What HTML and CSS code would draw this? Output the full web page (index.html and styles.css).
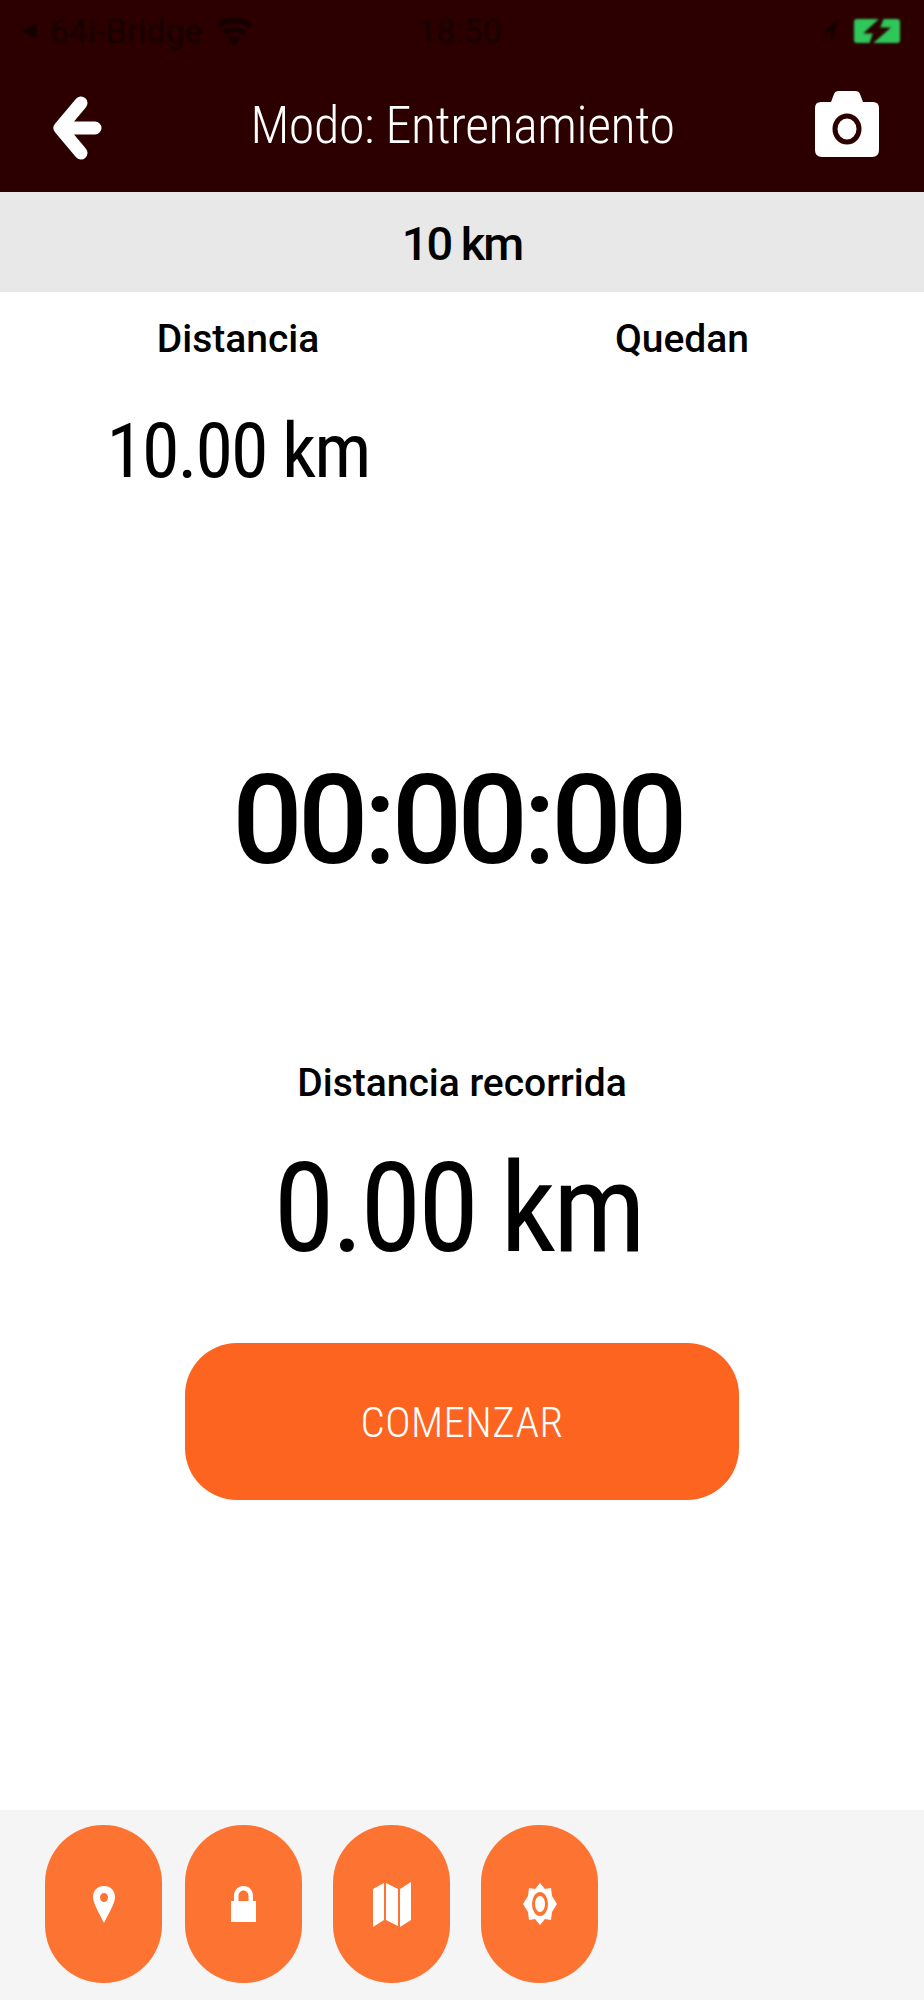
FILE: index.html
```html
<!DOCTYPE html>
<html lang="es">
<head>
  <meta charset="UTF-8">
  <meta name="viewport" content="width=device-width, initial-scale=1.0">
  <title>Modo: Entrenamiento</title>
  <link rel="stylesheet" href="styles.css">
</head>
<body>
  <div id="app">
    <header class="top-bar">
      <div class="status-bar">
        <div class="status-left">
          <svg class="status-back" viewBox="0 0 14 16"><path d="M14 1v14L0 8z"/></svg>
          <span class="status-carrier">64i-Bridge</span>
          <svg class="status-wifi" viewBox="0 0 36 28"><path d="M18 28l-6-7a9 9 0 0 1 12 0z"/><path d="M9.500 18l-3.200-3.800a18 18 0 0 1 23.400 0L26.500 18a13 13 0 0 0-17 0z"/><path d="M3.800 11.500L0.500 7.500a27 27 0 0 1 35 0l-3.300 4a22 22 0 0 0-28.400 0z"/></svg>
        </div>
        <span class="status-time">18:50</span>
        <div class="status-right">
          <svg class="status-loc" viewBox="0 0 16 24"><path d="M16 0L0 13h8v11z"/></svg>
          <svg class="status-batt" viewBox="0 0 46 26">
            <rect x="0" y="1" width="46" height="24" rx="3" fill="#2fc65a"/>
            <path d="M27 1L13 14h8l-4 11 16-14h-9l4-10z" fill="#2d0000" stroke="#2d0000" stroke-width="3"/>
          </svg>
        </div>
      </div>
      <div class="nav-bar">
        <svg class="nav-back" viewBox="0 0 50 64">
          <path d="M29 7L8 32l21 25M10 32h33" fill="none" stroke="#fff" stroke-width="13" stroke-linecap="round" stroke-linejoin="round"/>
        </svg>
        <h1 class="nav-title">Modo: Entrenamiento</h1>
        <svg class="nav-camera" viewBox="0 0 64 68">
          <path d="M6 12h10l3-8q1-3 5-3h16q4 0 5 3l3 8h10q6 0 6 6v42q0 7-7 7H7q-7 0-7-7V18q0-6 6-6z" fill="#fff"/>
          <ellipse cx="32" cy="39" rx="12" ry="13" fill="none" stroke="#2d0000" stroke-width="5"/>
        </svg>
      </div>
    </header>

    <div class="sub-bar">10 km</div>

    <section class="stats">
      <div class="stat">
        <div class="stat-label">Distancia</div>
        <div class="stat-value">10.00 km</div>
      </div>
      <div class="stat">
        <div class="stat-label">Quedan</div>
      </div>
    </section>

    <div class="timer">00:00:00</div>

    <section class="travelled">
      <div class="stat-label">Distancia recorrida</div>
      <div class="travelled-value">0.00 km</div>
    </section>

    <button class="start-btn" type="button">COMENZAR</button>

    <footer class="tabs">
      <button class="tab-btn" type="button">
        <svg class="icon-pin" viewBox="0 0 22 37"><path fill-rule="evenodd" d="M11 0c6.500 0 11 4.700 11 10.800C22 17.500 16 27 11 37 6 27 0 17.500 0 10.800 0 4.700 4.500 0 11 0zm0 7a4 4.500 0 1 0 0 9 4 4.500 0 0 0 0-9z"/></svg>
      </button>
      <button class="tab-btn" type="button">
        <svg class="icon-lock" viewBox="0 0 25 36"><path fill-rule="evenodd" d="M0 15h3V10C3 4 7 0 12.500 0S22 4 22 10v5h3v21H0zm7.500 0h10V10c0-3-2-5.500-5-5.500s-5 2.500-5 5.500z"/></svg>
      </button>
      <button class="tab-btn" type="button">
        <svg class="icon-map" viewBox="0 0 38 45"><path d="M0 7l11-6v37L0 45zM13 1l12 6v37l-12-6zM27 7l11-7v38l-11 7z"/></svg>
      </button>
      <button class="tab-btn" type="button">
        <svg class="icon-gear" viewBox="0 0 34 42"><path fill-rule="evenodd" d="M17 0l5 6 6-1 1 8 5 8-5 8-1 8-6-1-5 6-5-6-6 1-1-8-5-8 5-8 1-8 6 1zm0 9a8 12 0 1 0 0 24 8 12 0 0 0 0-24zm0 4a5 8 0 1 1 0 16 5 8 0 0 1 0-16z"/></svg>
      </button>
    </footer>
  </div>
</body>
</html>
```

FILE: styles.css
```css
/* page */
body {
  margin: 0;
  font-family: Roboto, "Liberation Sans", sans-serif;
  font-stretch: 80%;
  color: #000;
  background: #fff;
}

#app {
  height: 2000px;
  display: flex;
  flex-direction: column;
  overflow: hidden;
}

/* header */
.top-bar {
  height: 192px;
  background: #2d0000;
  flex-shrink: 0;
}

.status-bar {
  height: 62px;
  padding: 0 24px 0 20px;
  display: flex;
  align-items: center;
  justify-content: space-between;
  color: #150000;
  font-size: 34px;
  font-stretch: 88%;
  filter: blur(1px);
}

.status-left,
.status-right {
  width: 300px;
  display: flex;
  align-items: center;
}

.status-right {
  justify-content: flex-end;
  gap: 15px;
}

.status-left svg,
.status-right svg {
  fill: #150000;
}

.status-carrier {
  margin: 0 12px;
}

.status-back {
  width: 18px;
  height: 18px;
}

.status-wifi {
  width: 38px;
  height: 30px;
}

.status-loc {
  width: 16px;
  height: 24px;
}

.status-batt {
  width: 46px;
  height: 26px;
}

.nav-bar {
  height: 130px;
  padding: 0 45px 0 52px;
  display: flex;
  align-items: flex-start;
  justify-content: space-between;
}

.nav-back {
  width: 50px;
  height: 64px;
  margin-top: 34px;
}

.nav-title {
  margin: 33px 0 0 8px;
  font-size: 52px;
  font-stretch: 78%;
  font-weight: 300;
  letter-spacing: -0.4px;
  color: #fff;
}

.nav-camera {
  width: 64px;
  height: 68px;
  margin-top: 28px;
}

.sub-bar {
  height: 100px;
  background: #e8e8e8;
  font-size: 47px;
  font-stretch: 88%;
  font-weight: 500;
  letter-spacing: -2px;
  line-height: 103px;
  text-align: center;
  flex-shrink: 0;
}

/* numbers */
.stats {
  height: 461px;
  padding: 0 20px 0 16px;
  display: flex;
  justify-content: space-between;
  flex-shrink: 0;
}

.stat {
  width: 446px;
  text-align: center;
}

.stat-label {
  font-size: 39px;
  font-stretch: 88%;
  font-weight: 500;
  line-height: 44px;
}

.stats .stat-label {
  margin-top: 25px;
}

.stat-value {
  margin-top: 50px;
  font-size: 76px;
  font-stretch: 75%;
  letter-spacing: -2px;
  line-height: 80px;
}

.timer {
  padding-right: 9px;
  font-size: 124px;
  font-stretch: 88%;
  font-weight: 500;
  letter-spacing: -4.7px;
  line-height: 136px;
  text-align: center;
}

.travelled {
  margin-top: 172px;
  text-align: center;
}

.travelled-value {
  margin-top: 44px;
  padding-right: 8px;
  font-size: 124px;
  font-stretch: 75%;
  letter-spacing: -3.6px;
  line-height: 120px;
}

.start-btn {
  width: 554px;
  height: 157px;
  margin: 74px 0 0 185px;
  border: 0;
  border-radius: 52px;
  background: #fd6420;
  color: #fff;
  font-family: inherit;
  font-stretch: 81%;
  font-size: 43px;
  font-weight: 300;
  letter-spacing: 0.4px;
  padding: 0;
  flex-shrink: 0;
}

/* bottom tabs */
.tabs {
  margin-top: auto;
  height: 190px;
  background: #f5f5f5;
  padding: 15px 0 0 45px;
  display: flex;
  align-items: flex-start;
  gap: 31px;
  box-sizing: border-box;
}

.tab-btn {
  width: 117px;
  height: 158px;
  padding: 0;
  border: 0;
  border-radius: 58px;
  background: #fd7332;
  display: flex;
  align-items: center;
  justify-content: center;
}

.tab-btn:first-child {
  margin-right: -8px;
}

.tab-btn svg {
  fill: #fff;
}

.icon-pin {
  width: 22px;
  height: 37px;
}

.icon-lock {
  width: 25px;
  height: 36px;
}

.icon-map {
  width: 38px;
  height: 45px;
}

.icon-gear {
  width: 34px;
  height: 42px;
}
```
